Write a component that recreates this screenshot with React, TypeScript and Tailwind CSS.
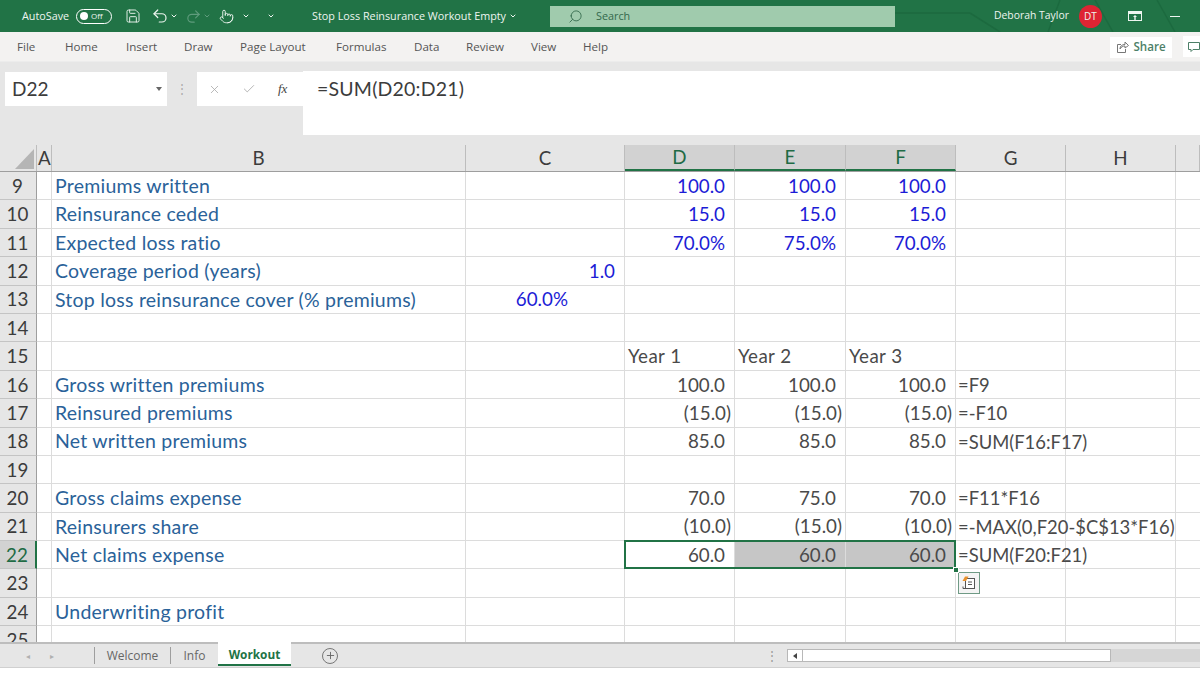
import React from 'react';
import { Save, Undo2, Redo2, ChevronDown, Search, X, Check, Plus, Pointer } from 'lucide-react';

interface Row {
  n: number;
  b?: string;
  c?: string;
  cClass?: string;
  d?: string;
  e?: string;
  f?: string;
  g?: string;
  kind?: 'input' | 'plain' | 'year';
}

const rows: Row[] = [
  { n: 9, b: 'Premiums written', d: '100.0', e: '100.0', f: '100.0', kind: 'input' },
  { n: 10, b: 'Reinsurance ceded', d: '15.0', e: '15.0', f: '15.0', kind: 'input' },
  { n: 11, b: 'Expected loss ratio', d: '70.0%', e: '75.0%', f: '70.0%', kind: 'input' },
  { n: 12, b: 'Coverage period (years)', c: '1.0', cClass: 'pr-[9px]' },
  { n: 13, b: 'Stop loss reinsurance cover (% premiums)', c: '60.0%', cClass: 'pr-[56px]' },
  { n: 14 },
  { n: 15, d: 'Year 1', e: 'Year 2', f: 'Year 3', kind: 'year' },
  { n: 16, b: 'Gross written premiums', d: '100.0', e: '100.0', f: '100.0', g: '=F9' },
  { n: 17, b: 'Reinsured premiums', d: '(15.0)', e: '(15.0)', f: '(15.0)', g: '=-F10' },
  { n: 18, b: 'Net written premiums', d: '85.0', e: '85.0', f: '85.0', g: '=SUM(F16:F17)' },
  { n: 19 },
  { n: 20, b: 'Gross claims expense', d: '70.0', e: '75.0', f: '70.0', g: '=F11*F16' },
  { n: 21, b: 'Reinsurers share', d: '(10.0)', e: '(15.0)', f: '(10.0)', g: '=-MAX(0,F20-$C$13*F16)' },
  { n: 22, b: 'Net claims expense', d: '60.0', e: '60.0', f: '60.0', g: '=SUM(F20:F21)' },
  { n: 23 },
  { n: 24, b: 'Underwriting profit' },
  { n: 25 },
];

const gridCols = 'grid grid-cols-[37px_15px_414px_159px_110px_111px_110px_110px_110px_24px]';
const tabs = [
  { label: 'File', width: 'w-[48px] ml-[17px]' },
  { label: 'Home', width: 'w-[61px]' },
  { label: 'Insert', width: 'w-[58px]' },
  { label: 'Draw', width: 'w-[56px]' },
  { label: 'Page Layout', width: 'w-[96px]' },
  { label: 'Formulas', width: 'w-[78px]' },
  { label: 'Data', width: 'w-[52px]' },
  { label: 'Review', width: 'w-[65px]' },
  { label: 'View', width: 'w-[52px]' },
  { label: 'Help', width: 'w-[40px]' },
];

function NumCell({ value, kind, selected }: { value?: string; kind?: Row['kind']; selected?: boolean }) {
  const isParen = value?.startsWith('(');
  const base = 'h-full pt-[1px] border-r border-b border-[#dcdcdc] whitespace-nowrap flex items-center';
  const color = kind === 'input' ? 'text-[#1c1cd6]' : 'text-[#4a4a4a]';
  if (kind === 'year') {
    return <div className={`${base} justify-start pl-[3px] ${color} tracking-[0.4px]`}>{value}</div>;
  }
  return (
    <div className={`${base} justify-end ${isParen ? 'pr-[3px]' : 'pr-[9px]'} ${color} ${selected ? 'bg-[#c6c6c6]' : ''}`}>
      {value}
    </div>
  );
}

function PasteOptions() {
  return (
    <div className="absolute left-[2px] top-[3px] w-[22px] h-[22px] border border-[#6f9a85] bg-[#f4f4f4] flex items-center justify-center">
      <svg width="16" height="16" viewBox="0 0 16 16" fill="none">
        <rect x="4.5" y="3.5" width="9" height="10" stroke="#555" fill="#fff" />
        <path d="M7 7h4M7 9.5h4M2 11.5v2h9" stroke="#555" />
        <path d="M1.5 6 L4 1.5 L7.5 1.5 L5 6z" fill="#e8912d" />
      </svg>
    </div>
  );
}

export default function App() {
  return (
    <div className="w-[1200px] h-[675px] flex flex-col overflow-hidden bg-white font-['Open_Sans',sans-serif]">
      {/* Title bar */}
      <div className="relative h-[32px] shrink-0 bg-[#217346] text-[#eef5f0] text-[10.8px] flex items-center">
        <svg className="absolute left-[895px] top-0" width="305" height="32" viewBox="0 0 305 32" fill="none">
          <path d="M0 13h75M165 0l-12 32M200 0l18 32M75 13l30 19M262 0l18 32" stroke="#1c6a3f" strokeWidth="1.5" />
        </svg>
        <span className="ml-[22px] w-[48px] relative">AutoSave</span>
        <div className="ml-[6px] w-[36px] h-[15px] rounded-full border border-white flex items-center gap-[3px] pl-[3px]">
          <span className="w-[8px] h-[8px] rounded-full bg-white" />
          <span className="text-[8px] leading-none">Off</span>
        </div>
        <Save size={16} strokeWidth={1.4} className="ml-[13px]" />
        <Undo2 size={18} strokeWidth={1.6} className="ml-[10px]" />
        <ChevronDown size={8} strokeWidth={3} className="ml-[1px]" />
        <Redo2 size={17} strokeWidth={1.6} className="ml-[7px] text-[#5f9c7d]" />
        <ChevronDown size={8} strokeWidth={3} className="ml-[1px] text-[#5f9c7d]" />
        <Pointer size={15} strokeWidth={1.5} className="ml-[8px]" />
        <ChevronDown size={8} strokeWidth={3} className="ml-[8px]" />
        <ChevronDown size={8} strokeWidth={3} className="ml-[17px]" />
        <span className="ml-[37px] w-[193px] whitespace-nowrap">Stop Loss Reinsurance Workout Empty</span>
        <ChevronDown size={8} strokeWidth={3} className="ml-[4px]" />
        <div className="relative ml-[33px] w-[345px] h-[21px] bg-[#a0cbad] flex items-center text-[#33694c]">
          <Search size={15} strokeWidth={1.4} className="ml-[18px] -scale-x-100" />
          <span className="ml-[13px]">Search</span>
        </div>
        <span className="relative ml-[99px] w-[74px] whitespace-nowrap text-[10.4px]">Deborah Taylor</span>
        <div className="relative ml-[11px] w-[23px] h-[23px] rounded-full bg-[#de2433] flex items-center justify-center text-[10px]">DT</div>
        <svg width="14" height="12" viewBox="0 0 14 12" className="relative ml-[26px]" fill="none">
          <rect x="0.5" y="1.5" width="13" height="9" stroke="#eef5f0" />
          <path d="M1 2h12v2H1zM7 5l-2 2h4z M6.3 7h1.4v3H6.3z" fill="#eef5f0" />
        </svg>
        <span className="relative ml-[28px] w-[10px] h-px bg-[#eef5f0]" />
      </div>

      {/* Ribbon tabs */}
      <div className="relative h-[29px] shrink-0 bg-[#f3f2f1] flex items-center text-[11.6px] text-[#555]">
        {tabs.map(t => (
          <span key={t.label} className={t.width}>{t.label}</span>
        ))}
        <div className="ml-auto mr-[28px] w-[62px] h-[21px] mt-[1px] bg-white flex items-center justify-center gap-[4px] text-[#4c7f67] font-semibold">
          <svg width="13" height="12" viewBox="0 0 13 12" fill="none">
            <path d="M5 3.5H1.5v8h8V8" stroke="#777" />
            <path d="M4 8c0-3 2-4.500 5-4.500V1l3.500 3.500L9 7V5C7 5 5 6 4 8z" stroke="#777" />
          </svg>
          Share
        </div>
        <div className="absolute right-0 top-[4px] w-[17px] h-[21px] bg-white pl-[5px] pt-[5px]">
          <svg width="12" height="12" viewBox="0 0 12 12" fill="none">
            <path d="M0.5 1.500h11v7H5l-2 2v-2H0.5z" stroke="#4c7f67" />
          </svg>
        </div>
      </div>

      {/* Formula bar */}
      <div className="h-[84px] shrink-0 bg-[#e6e6e6] border-t border-t-[#ececec] flex items-start pt-[10px]">
        <div className="ml-[5px] w-[162px] h-[34px] bg-white flex items-center justify-between pl-[7px] pr-[5px] font-['Lato',sans-serif] text-[19px] text-[#3c3c3c]">
          D22
          <span className="w-0 h-0 border-x-[3px] border-x-transparent border-t-[4px] border-t-[#666]" />
        </div>
        <div className="w-[30px] h-[34px] flex items-center justify-center text-[#aaa] text-[12px] leading-none">⋮</div>
        <div className="w-[106px] h-[34px] bg-white flex items-center text-[#aaa]">
          <X size={13} strokeWidth={1.5} className="ml-[11px]" />
          <Check size={14} strokeWidth={1.5} className="ml-[21px]" />
          <span className="ml-[22px] text-[13px] italic text-[#444] font-['Liberation_Serif',serif]">fx</span>
        </div>
        <div className="flex-1 h-[64px] -mt-[1px] bg-white pl-[14px] pt-[4px] font-['Lato',sans-serif] text-[19.5px] text-[#3c3c3c] leading-[28px] tracking-[0.2px]">
          =SUM(D20:D21)
        </div>
      </div>

      {/* Sheet */}
      <div className="h-[497px] shrink-0 bg-white overflow-hidden font-['Lato',sans-serif] text-[18.8px] leading-none">
        <div className={`${gridCols} h-[27px] bg-[#e6e6e6] text-[#3c3c3c] border-b border-[#9e9e9e]`}>
          <div className="relative border-r border-[#bdbdbd]">
            <span className="absolute left-[15px] bottom-[2px] w-0 h-0 border-l-[19px] border-l-transparent border-b-[20px] border-b-[#b5b5b5]" />
          </div>
          <div className="flex items-center pl-[1px] pt-[1px] border-r border-[#bdbdbd]">A</div>
          {['B', 'C', 'D', 'E', 'F', 'G', 'H', ''].map(h => {
            const sel = h === 'D' || h === 'E' || h === 'F';
            return (
              <div
                key={h}
                className={`flex items-center justify-center pt-[1px] border-r border-[#bdbdbd] ${sel ? 'bg-[#d2d2d2] text-[#1f6b45] border-b-2 border-b-[#217346]' : ''}`}
              >
                {h}
              </div>
            );
          })}
        </div>
        {rows.map(r => {
          const active = r.n === 22;
          return (
            <div key={r.n} className={`${gridCols} h-[28.4px]`}>
              <div
                className={`flex items-center justify-center pt-[1px] border-b border-b-[#c4c4c4] ${active ? 'bg-[#d2d2d2] text-[#1f6b45] border-r-2 border-r-[#217346]' : 'bg-[#e6e6e6] text-[#3c3c3c] border-r border-r-[#9e9e9e]'}`}
              >
                <span className="pr-[1px]">{r.n}</span>
              </div>
              <div className="border-r border-b border-[#dcdcdc]" />
              <div className="border-r border-b border-[#dcdcdc] flex items-center pl-[3px] text-[19.5px] text-[#2a6299] whitespace-nowrap tracking-[0.23px]">{r.b}</div>
              <div className={`pt-[1px] border-r border-b border-[#dcdcdc] flex items-center justify-end text-[#1c1cd6] ${r.cClass ?? ''}`}>{r.c}</div>
              <div className="relative">
                <NumCell value={r.d} kind={r.kind} />
                {active && <div className="absolute left-[-1px] top-[-1px] w-[332px] h-[29.4px] border-2 border-[#217346] z-10" />}
                {active && <div className="absolute left-[328px] top-[26px] w-[6px] h-[6px] bg-[#217346] border border-white z-20" />}
              </div>
              <NumCell value={r.e} kind={r.kind} selected={active} />
              <NumCell value={r.f} kind={r.kind} selected={active} />
              <div className="relative pt-[1px] border-r border-b border-[#dcdcdc] flex items-center pl-[2px] text-[18.4px] text-[#4a4a4a] whitespace-nowrap">
                {r.g}
                {r.n === 23 && <PasteOptions />}
              </div>
              <div className="border-r border-b border-[#dcdcdc]" />
              <div className="border-b border-[#dcdcdc]" />
            </div>
          );
        })}
      </div>

      {/* Sheet tabs */}
      <div className="h-[26px] shrink-0 bg-[#e6e6e6] border-t-2 border-t-[#bdbdbd] border-b border-b-[#d0d0d0] flex items-stretch text-[12px] text-[#666]">
        <div className="w-[95px] flex items-center text-[#b0b0b0] text-[8px] border-r border-r-[#9e9e9e] my-[3px]">
          <span className="ml-[26px]">◂</span>
          <span className="ml-[20px]">▸</span>
        </div>
        <div className="w-[76px] flex items-center justify-center border-r border-r-[#9e9e9e] my-[3px]">Welcome</div>
        <div className="w-[47px] flex items-center justify-center">Info</div>
        <div className="w-[73px] -mt-[2px] mb-[1px] pt-[3px] bg-white border-b-2 border-b-[#217346] flex items-center justify-center font-bold text-[11.8px] text-[#217346]">Workout</div>
        <div className="ml-[31px] flex items-center">
          <div className="w-[16px] h-[16px] rounded-full border border-[#777] flex items-center justify-center">
            <Plus size={11} strokeWidth={2} className="text-[#666]" />
          </div>
        </div>
        <div className="ml-[428px] flex items-center text-[#999] text-[12px]">⋮</div>
        <div className="ml-[9px] my-[5px] w-[324px] bg-white border border-[#b8b8b8] flex items-stretch">
          <div className="w-[15px] border-r border-r-[#b8b8b8] flex items-center justify-center">
            <span className="w-0 h-0 border-y-[3px] border-y-transparent border-r-[4px] border-r-[#444]" />
          </div>
        </div>
        <div className="my-[5px] flex-1 bg-[#d6d6d6]" />
      </div>
      <div className="flex-1 bg-white" />
    </div>
  );
}
